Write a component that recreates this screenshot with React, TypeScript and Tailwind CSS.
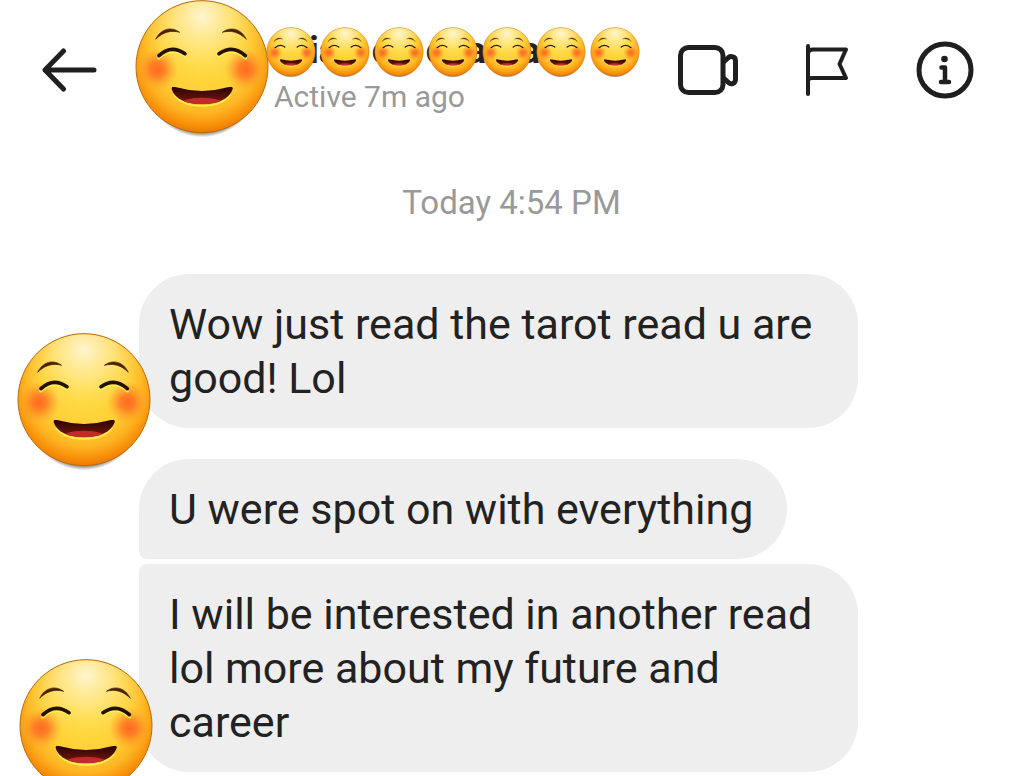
import { useId } from "react";
import { clsx } from "clsx";

interface Message {
  id: number;
  text: string;
  className: string;
  avatarClassName?: string;
}

const MESSAGES: Message[] = [
  {
    id: 1,
    text: "Wow just read the tarot read u are good! Lol",
    className: "rounded-[50px]",
    avatarClassName: "left-4 -bottom-[45px]",
  },
  {
    id: 2,
    text: "U were spot on with everything",
    className: "mt-[31px] rounded-[50px] rounded-bl-lg",
  },
  {
    id: 3,
    text: "I will be interested in another read lol more about my future and career",
    className: "mt-[5px] rounded-[50px] rounded-tl-lg",
    avatarClassName: "left-[18px] -bottom-[27px]",
  },
];

// Letters of the display name that peek out between the stickers.
const NAME_PARTS = [
  { text: "ia", className: "-mr-[22px]" },
  { text: "o", className: "-mr-[22px]" },
  { text: "o", className: "-mr-[22px]" },
  { text: "a", className: "-mr-2" },
  { text: "a", className: "-mr-2" },
  { text: "", className: "" },
  { text: "", className: "" },
];

function SmileFace({ className }: { className?: string }) {
  const id = useId();

  return (
    <svg viewBox="0 0 408 420" className={className} aria-hidden="true">
      <defs>
        <radialGradient id={`${id}-face`} cx="50%" cy="41%" r="60%">
          <stop offset="0" stopColor="#ffd93c" />
          <stop offset="0.52" stopColor="#fed038" />
          <stop offset="0.74" stopColor="#fdb522" />
          <stop offset="0.9" stopColor="#f88f08" />
          <stop offset="1" stopColor="#ee7400" />
        </radialGradient>
        <radialGradient id={`${id}-shine`} cx="50%" cy="12%" r="52%">
          <stop offset="0" stopColor="#fff5cf" />
          <stop offset="0.45" stopColor="#ffe98c" stopOpacity="0.75" />
          <stop offset="1" stopColor="#ffdc40" stopOpacity="0" />
        </radialGradient>
        <radialGradient id={`${id}-cheek`}>
          <stop offset="0" stopColor="#ff6a20" />
          <stop offset="0.35" stopColor="#ff7424" stopOpacity="0.85" />
          <stop offset="1" stopColor="#ff9a28" stopOpacity="0" />
        </radialGradient>
        <radialGradient id={`${id}-shadow`}>
          <stop offset="0.88" stopColor="#222" stopOpacity="0.85" />
          <stop offset="1" stopColor="#222" stopOpacity="0" />
        </radialGradient>
        <linearGradient id={`${id}-mouth`} x1="0" y1="0" x2="0" y2="1">
          <stop offset="0.2" stopColor="#2c0500" />
          <stop offset="1" stopColor="#851a10" />
        </linearGradient>
        <clipPath id={`${id}-lips`}>
          <path d="M113 268C111 260 118 259 127 262Q204 284 281 262C291 259 298 260 296 268C286 298 248 313 204 313C160 313 122 298 113 268Z" />
        </clipPath>
      </defs>
      <ellipse cx="204" cy="228" rx="178" ry="184" fill={`url(#${id}-shadow)`} />
      <circle cx="204" cy="200" r="198" fill={`url(#${id}-face)`} />
      <circle cx="204" cy="200" r="197" fill={`url(#${id}-shine)`} />
      <circle cx="204" cy="200" r="198" fill="none" stroke="#b86c0c" strokeWidth="3" />
      <circle cx="70" cy="208" r="62" fill={`url(#${id}-cheek)`} />
      <circle cx="334" cy="208" r="62" fill={`url(#${id}-cheek)`} />
      <g fill="#472008" stroke="#472008" strokeWidth="2" strokeLinejoin="round">
        <path d="M65 118C80 86 112 78 137 97C112 90 86 96 65 118Z" />
        <path d="M337 118C322 86 290 78 265 97C290 90 316 96 337 118Z" />
      </g>
      <g fill="none" stroke="#fff04a" strokeLinecap="round">
        <path d="M74 174Q112 138 154 168" strokeWidth="9" />
        <path d="M254 168Q296 138 335 174" strokeWidth="9" />
        <path d="M121 286Q147 318 204 318Q262 318 288 286" strokeWidth="5" />
      </g>
      <g fill="none" stroke="#241000" strokeWidth="11" strokeLinecap="round">
        <path d="M75 167Q111 132 153 161" />
        <path d="M255 161Q296 132 334 167" />
      </g>
      <g clipPath={`url(#${id}-lips)`}>
        <rect x="108" y="250" width="192" height="66" fill={`url(#${id}-mouth)`} />
        <ellipse cx="204" cy="314" rx="68" ry="21" fill="#c02c2c" />
      </g>
    </svg>
  );
}

function BackIcon() {
  return (
    <svg viewBox="0 0 56 44" className="h-11 w-14" fill="none" stroke="#1f1f1f" strokeWidth="5" strokeLinecap="round" strokeLinejoin="round" aria-hidden="true">
      <path d="M53 22H4M22.500 3L4 22L22.500 41" />
    </svg>
  );
}

function VideoIcon() {
  return (
    <svg viewBox="0 0 60 50" className="h-[50px] w-[60px]" fill="none" stroke="#1f1f1f" strokeWidth="5" strokeLinejoin="round" aria-hidden="true">
      <rect x="2.500" y="2.500" width="42.500" height="45" rx="8" />
      <path d="M45 17.500L50.500 12.500Q52.500 11 55 12Q57.500 12.500 57.500 16V34Q57.500 37.500 55 38.500Q52.500 39.500 50.500 37.500L45 32.500" />
    </svg>
  );
}

function FlagIcon() {
  return (
    <svg viewBox="0 0 44 52" className="h-[52px] w-11" fill="none" stroke="#1f1f1f" strokeWidth="4" strokeLinecap="round" strokeLinejoin="round" aria-hidden="true">
      <path d="M3 2V50" />
      <path d="M3 9.500Q3.500 5.500 8 5.500H41L34.500 20L41 34H7Q3.500 34 3 37" />
    </svg>
  );
}

function InfoIcon() {
  return (
    <svg viewBox="0 0 58 58" className="size-[58px]" fill="none" stroke="#1f1f1f" strokeWidth="5" strokeLinecap="round" strokeLinejoin="round" aria-hidden="true">
      <circle cx="29" cy="29" r="26" />
      <circle cx="28.500" cy="18" r="3.300" fill="#1f1f1f" stroke="none" />
      <path d="M25.500 26.500H29V41M25 41H33" strokeWidth="4.500" />
    </svg>
  );
}

function ChatHeader() {
  return (
    <header className="flex h-[140px] items-center pl-[41px] pr-[49px]">
      <button type="button" aria-label="Back" className="shrink-0">
        <BackIcon />
      </button>
      <SmileFace className="ml-[37px] h-[140px] w-[136px] shrink-0" />
      <div className="-ml-1 h-[140px] shrink-0 pt-[27px]">
        <h1 className="flex gap-1 text-[36px] font-bold leading-[48px] text-[#222]">
          {NAME_PARTS.map((part, index) => (
            <span key={index} className="flex h-[52px] w-[50px] justify-end">
              <span className={part.className}>{part.text}</span>
            </span>
          ))}
        </h1>
        <div className="relative z-10 -mt-[52px] flex gap-1">
          {NAME_PARTS.map((_, index) => (
            <SmileFace key={index} className="h-[52px] w-[50px]" />
          ))}
        </div>
        <p className="pl-2 text-[30px] leading-9 text-[#999]">Active 7m ago</p>
      </div>
      <nav className="ml-auto flex shrink-0 items-center gap-[67px]">
        <button type="button" aria-label="Video call">
          <VideoIcon />
        </button>
        <button type="button" aria-label="Flag conversation">
          <FlagIcon />
        </button>
        <button type="button" aria-label="Conversation info">
          <InfoIcon />
        </button>
      </nav>
    </header>
  );
}

function MessageRow({ message }: { message: Message }) {
  return (
    <li className="relative pl-[139px]">
      <p
        className={clsx(
          "w-fit max-w-[719px] bg-[#eeeeee] pl-[30px] pr-[34px] py-[23px] text-[43px] leading-[54px] text-[#222]",
          message.className
        )}
      >
        {message.text}
      </p>
      {message.avatarClassName ? (
        <SmileFace
          className={clsx("absolute z-10 h-[140px] w-[136px]", message.avatarClassName)}
        />
      ) : null}
    </li>
  );
}

export default function App() {
  return (
    <div className="h-screen overflow-hidden bg-white font-['Roboto',sans-serif]">
      <ChatHeader />
      <main>
        <p className="mt-[43px] text-center text-[33px] leading-10 text-[#999]">
          Today 4:54 PM
        </p>
        <ul className="mt-[51px]">
          {MESSAGES.map((message) => (
            <MessageRow key={message.id} message={message} />
          ))}
        </ul>
      </main>
    </div>
  );
}
